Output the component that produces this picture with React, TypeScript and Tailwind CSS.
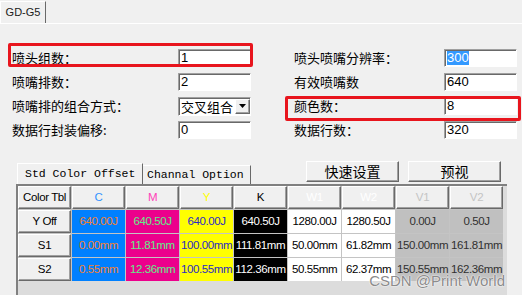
const sunken =
  "border-t border-l border-b border-r border-t-[#a0a0a0] border-l-[#a0a0a0] border-b-white border-r-white shadow-[inset_1px_1px_0_#696969]";
const raised =
  "border-t border-l border-b border-r border-t-white border-l-white border-b-[#696969] border-r-[#696969] shadow-[inset_-1px_-1px_0_#a0a0a0]";

const cjk = "font-['Noto_Sans_CJK_SC',sans-serif]";
const sans = "font-['Liberation_Sans','Noto_Sans_CJK_SC',sans-serif]";

type Field = { label: string; value: string; select?: boolean; selected?: boolean; marked?: boolean };

const leftFields: Field[] = [
  { label: "喷头组数：", value: "1", marked: true },
  { label: "喷嘴排数：", value: "2" },
  { label: "喷嘴排的组合方式：", value: "交叉组合", select: true },
  { label: "数据行封装偏移:", value: "0" },
];

const rightFields: Field[] = [
  { label: "喷头喷嘴分辨率：", value: "300", selected: true },
  { label: "有效喷嘴数", value: "640" },
  { label: "颜色数：", value: "8", marked: true },
  { label: "数据行数：", value: "320" },
];

const columns = [
  { h: "C", hc: "text-[#3393ff]", cell: "bg-[#0080ff] text-[#f3812f]", vals: ["640.00J", "0.00mm", "0.55mm"] },
  { h: "M", hc: "text-[#ff3fb8]", cell: "bg-[#ec008c] text-[#5cf08a]", vals: ["640.50J", "11.81mm", "12.36mm"] },
  { h: "Y", hc: "text-[#ffff00]", cell: "bg-[#ffff00] text-[#2a2ac4]", vals: ["640.00J", "100.00mm", "100.55mm"] },
  { h: "K", hc: "text-black", cell: "bg-black text-white", vals: ["640.50J", "111.81mm", "112.36mm"] },
  { h: "W1", hc: "text-white", cell: "bg-white text-black", vals: ["1280.00J", "50.00mm", "50.55mm"] },
  { h: "W2", hc: "text-white", cell: "bg-white text-black", vals: ["1280.50J", "61.82mm", "62.37mm"] },
  { h: "V1", hc: "text-[#c4c4c4]", cell: "bg-[#c0c0c0] text-[#303030]", vals: ["0.00J", "150.00mm", "150.55mm"] },
  { h: "V2", hc: "text-[#c4c4c4]", cell: "bg-[#c0c0c0] text-[#303030]", vals: ["0.50J", "161.81mm", "162.36mm"] },
];

const rowNames = ["Y Off", "S1", "S2"];

const Input = ({ f }: { f: Field }) => {
  if (f.select) {
    return (
      <div className={`${sunken} flex h-[19px] w-[73px] items-center bg-white`}>
        <span className={`${cjk} flex-1 pl-[2px] text-[13px] leading-none text-black`}>{f.value}</span>
        <div className={`${raised} flex h-[15px] w-[15px] items-center justify-center bg-[#f0f0f0]`}>
          <svg width="7" height="4" viewBox="0 0 7 4">
            <path d="M0 0h7L3.5 4z" fill="#000" />
          </svg>
        </div>
      </div>
    );
  }
  return (
    <div className={`${sunken} flex h-[18px] w-[73px] items-center bg-white pl-[2px]`}>
      <span
        className={`${sans} text-[13px] leading-[14px] ${f.selected ? "bg-[#3399ff] text-white" : "text-black"}`}
      >
        {f.value}
      </span>
    </div>
  );
};

const FieldColumn = ({ fields, width, box }: { fields: Field[]; width: string; box: string }) => (
  <div className={`flex flex-col ${width}`}>
    {fields.map((f, i) => (
      <div key={i} className="relative flex h-[24px] items-center justify-between">
        <span className={`${cjk} text-[13px] text-black`}>{f.label}</span>
        <Input f={f} />
        {f.marked && <div className={`absolute border-[3px] border-[#e8151d] rounded-[2px] ${box}`} />}
      </div>
    ))}
  </div>
);

export default function App() {
  return (
    <div className="relative h-[295px] w-[522px] overflow-hidden bg-[#f0f0f0]">
      {/* top tab */}
      <div className="flex h-[24px] items-end border-b border-white">
        <div className="flex h-[22px] w-[46px] items-center justify-center border-l border-t border-r border-l-white border-t-white border-r-[#696969]">
          <span className={`${sans} text-[11px] text-[#202020]`}>GD-G5</span>
        </div>
      </div>

      {/* fields */}
      <div className="mt-[22px] flex">
        <div className="ml-[12px]">
          <FieldColumn fields={leftFields} width="w-[239px]" box="-left-[4px] -right-[2px] -top-[3px] h-[24px]" />
        </div>
        <div className="ml-[43px]">
          <FieldColumn fields={rightFields} width="w-[223px]" box="-left-[9px] -right-[4px] top-[2px] h-[25px]" />
        </div>
      </div>

      {/* tabs and buttons */}
      <div className="mt-[19px] flex h-[23px] items-end">
        <div className="ml-[17px] flex items-end">
          <div className="flex h-[21px] w-[126px] items-center border-l border-t border-r border-l-white border-t-white border-r-[#696969] pl-[7px]">
            <span className="font-['Liberation_Mono',monospace] text-[11.5px] text-black">Std Color Offset</span>
          </div>
          <div className="flex h-[19px] w-[108px] items-center border-t border-r border-t-white border-r-[#696969] pl-[4px]">
            <span className="font-['Liberation_Mono',monospace] text-[11.5px] text-black">Channal Option</span>
          </div>
        </div>
        <div className="mb-[2px] ml-[55px] flex gap-[9px]">
          {["快速设置", "预视"].map((b) => (
            <div key={b} className={`${raised} flex h-[21px] w-[93px] items-center justify-center bg-[#f0f0f0]`}>
              <span className={`${cjk} text-[14px] text-black`}>{b}</span>
            </div>
          ))}
        </div>
      </div>

      {/* grid */}
      <div className="ml-[16px] h-[112px] w-[491px] border-l-2 border-t-2 border-l-[#808080] border-t-[#808080] bg-[#dcdcdc]">
        <div className={`${sans} grid w-fit grid-cols-[repeat(9,53px)] grid-rows-[repeat(4,23px)] gap-px bg-[#c4c4c4] text-[11.5px] tracking-[-0.4px]`}>
          <div className={`${raised} flex items-center justify-center bg-[#f0f0f0] text-black`}>Color Tbl</div>
          {columns.map((c) => (
            <div key={c.h} className={`${raised} flex items-center justify-center bg-[#f0f0f0] ${c.hc}`}>
              {c.h}
            </div>
          ))}
          {rowNames.map((r, ri) => (
            <div key={r} className="contents">
              <div className={`${raised} flex items-center justify-center bg-[#f0f0f0] text-black`}>{r}</div>
              {columns.map((c) => (
                <div key={c.h} className={`flex items-center justify-center whitespace-nowrap ${c.cell}`}>
                  {c.vals[ri]}
                </div>
              ))}
            </div>
          ))}
        </div>
      </div>

      {/* watermark */}
      <div
        className={`absolute bottom-[3px] right-[17px] ${sans} text-[15px] text-[#7c7c7c]/90 [text-shadow:0_0_2px_#ffffff,0_0_1px_#ffffff]`}
      >
        CSDN @Print World
      </div>
    </div>
  );
}
